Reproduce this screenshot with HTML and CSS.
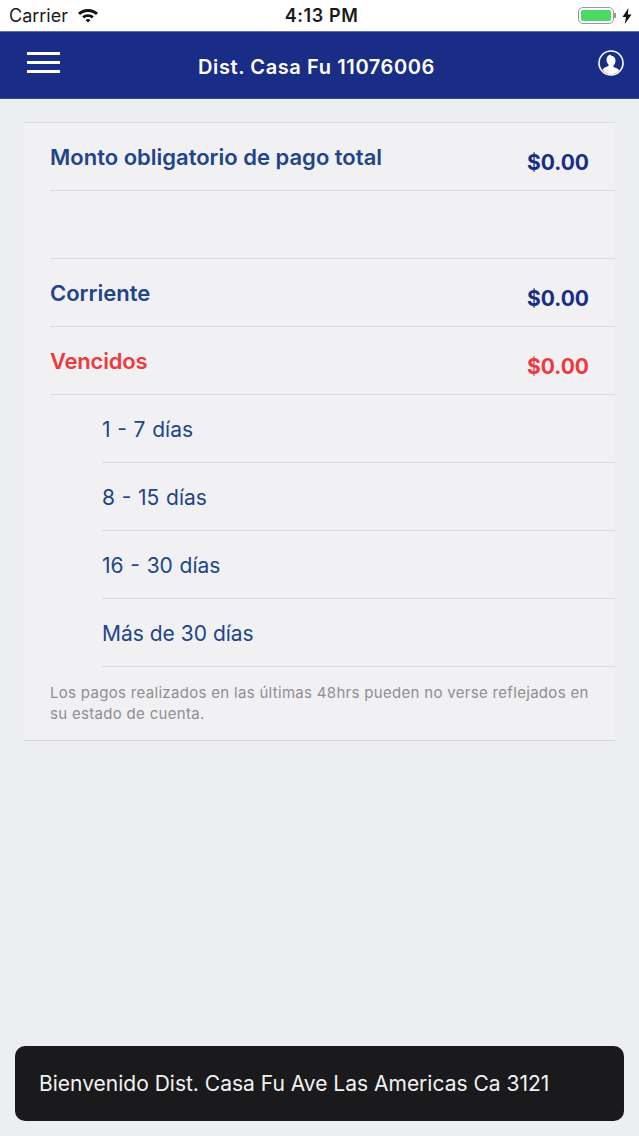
FILE: index.html
```html
<!DOCTYPE html>
<html lang="es">

<head>
  <meta charset="UTF-8">
  <meta name="viewport" content="width=device-width, initial-scale=1.0">
  <title>Estado de cuenta</title>
  <link rel="stylesheet" href="styles.css">
</head>

<body>
  <div class="status">
    <div class="status-left">
      <span>Carrier</span>
      <svg class="wifi" viewBox="0 0 22 16" width="22" height="16">
        <path d="M11 1C7 1 3.800 2.400 1 4.800L3 7C5.200 5 7.900 4 11 4s5.800 1 8 3l2-2.200C18.200 2.400 15 1 11 1z" fill="#111"/>
        <path d="M11 6.200c-2.300 0-4.200.8-5.800 2.200l2 2.100c1-.9 2.300-1.400 3.800-1.400s2.800.5 3.800 1.400l2-2.100C15.200 7 13.300 6.200 11 6.200z" fill="#111"/>
        <path d="M11 11c-1 0-1.800.3-2.400.9L11 14.500l2.400-2.600C12.800 11.300 12 11 11 11z" fill="#111"/>
      </svg>
    </div>
    <div class="status-time">4:13 PM</div>
    <div class="status-right">
      <div class="battery"><div class="battery-fill"></div></div>
      <div class="battery-tip"></div>
      <svg class="bolt" viewBox="0 0 10 16" width="10" height="16">
        <path d="M6.500 0L0.500 9h3.500L2.800 16l6.700-9.500H5.800z" fill="#111"/>
      </svg>
    </div>
  </div>

  <header class="topbar">
    <div class="burger"><span></span><span></span><span></span></div>
    <h1>Dist. Casa Fu 11076006</h1>
    <svg class="user" viewBox="0 0 26 26" width="26" height="26">
      <circle cx="13" cy="13" r="12" fill="#1a2d86" stroke="#fff" stroke-width="1.600"/>
      <path d="M13 4.800c-2.800 0-4.500 2.100-4.500 4.900 0 2 .8 3.700 2 4.700v1.500c-2.600 1-5 2-6 3.500C6.700 22.700 9.700 24.300 13 24.300s6.300-1.600 8.500-3.900c-1-1.500-3.400-2.500-6-3.500v-1.500c1.200-1 2-2.700 2-4.700 0-2.800-1.700-4.900-4.500-4.900z" fill="#fff"/>
    </svg>
  </header>

  <main class="panel">
    <div class="row row-main">
      <span class="label">Monto obligatorio de pago total</span>
      <span class="amount">$0.00</span>
    </div>
    <div class="row row-empty"></div>
    <div class="row row-main">
      <span class="label">Corriente</span>
      <span class="amount">$0.00</span>
    </div>
    <div class="row row-main overdue">
      <span class="label">Vencidos</span>
      <span class="amount">$0.00</span>
    </div>
    <div class="row row-sub range">1 - 7 días</div>
    <div class="row row-sub range">8 - 15 días</div>
    <div class="row row-sub range">16 - 30 días</div>
    <div class="row row-sub">Más de 30 días</div>
    <p class="note">Los pagos realizados en las últimas 48hrs pueden no verse reflejados en su estado de cuenta.</p>
  </main>

  <div class="toast">Bienvenido Dist. Casa Fu Ave Las Americas Ca 3121</div>
</body>

</html>
```

FILE: styles.css
```css
* {
  margin: 0;
  padding: 0;
  box-sizing: border-box;
}

html,
body {
  height: 1136px;
  overflow: hidden;
}

body {
  position: relative;
  background-color: #edeeef;
  font-family: Inter, "Noto Sans", "Liberation Sans", sans-serif;
}

.status {
  height: 31px;
  background-color: #fff;
  display: grid;
  grid-template-columns: 1fr auto 1fr;
  align-items: center;
  padding: 0 7px 0 9px;
  color: #1a1a1a;
}

.status-left {
  display: flex;
  align-items: center;
  gap: 9px;
  font-size: 18px;
}

.status-time {
  font-size: 18px;
  font-weight: 600;
  letter-spacing: 0.6px;
  margin-left: 2px;
}

.status-right {
  display: flex;
  align-items: center;
  justify-content: flex-end;
}

.battery {
  width: 36px;
  height: 17px;
  border: 1px solid #9a9a9a;
  border-radius: 5px;
  padding: 2px;
}

.battery-fill {
  height: 100%;
  background-color: #4cd964;
  border-radius: 2px;
}

.battery-tip {
  width: 2px;
  height: 5px;
  background-color: #9a9a9a;
  margin-right: 6px;
}

.topbar {
  height: 68px;
  background-color: #1a2d86;
  border-top: 1px solid #5a6db0;
  border-bottom: 1px solid #2f4596;
  display: flex;
  align-items: center;
  justify-content: space-between;
  padding: 0 15px 0 27px;
  color: #fff;
}

.burger {
  width: 33px;
  display: flex;
  flex-direction: column;
  gap: 6px;
  margin-bottom: 5px;
}

.burger span {
  height: 3px;
  background-color: #fff;
}

.topbar h1 {
  margin: 3px 25px 0 0;
  font-size: 20px;
  font-weight: 600;
  letter-spacing: 0.6px;
}

.user {
  margin-bottom: 5px;
}

.panel {
  width: 591px;
  height: 619px;
  margin: 23px 0 0 24px;
  padding-left: 26px;
  background-color: #f1f1f3;
  border-top: 1px solid #dcdcde;
  border-bottom: 1px solid #d6d6d8;
}

.row {
  height: 68px;
  border-bottom: 1px solid #dcdcde;
}

.row-main {
  display: flex;
  justify-content: space-between;
  padding: 21px 26px 0 0;
  color: #224488;
  font-size: 22px;
  font-weight: 600;
}

.row-main .amount {
  color: #1a2d86;
  margin-top: 6px;
  font-size: 21px;
  font-weight: 700;
}

.row-main.overdue .label,
.row-main.overdue .amount {
  color: #ec3a3f;
}

.row-main.overdue .label {
  letter-spacing: -0.2px;
}

.row-sub {
  margin-left: 52px;
  display: flex;
  align-items: center;
  padding-top: 2px;
  color: #224488;
  font-size: 21px;
}

.row-sub.range {
  word-spacing: 0.8px;
}

.note {
  margin-top: 15px;
  padding-right: 20px;
  color: #8e8e93;
  font-size: 15px;
  line-height: 21px;
  letter-spacing: 0.31px;
}

.toast {
  position: absolute;
  left: 15px;
  top: 1046px;
  width: 609px;
  height: 75px;
  display: flex;
  align-items: center;
  padding-left: 24px;
  background-color: #1a1a1c;
  border-radius: 10px;
  color: #f2f2f2;
  font-size: 21px;
}
```
